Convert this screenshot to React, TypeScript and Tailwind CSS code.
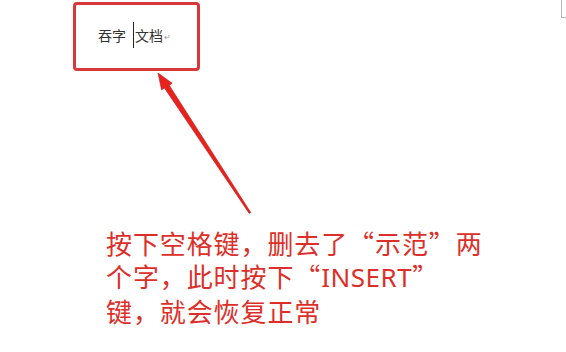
import React from "react";

export default function App() {
  const cjk = '"Noto Sans CJK SC", "Microsoft YaHei", sans-serif';
  return (
    <div className="relative w-[566px] h-[352px] overflow-hidden bg-white">
      {/* page corner mark */}
      <div className="absolute left-[561px] top-0 h-[18px] w-[6px] border-l border-b border-[#b8b8b8]" />

      <div className="flex flex-col">
        <div className="ml-[73px] mt-[2px] flex h-[69px] w-[127px] items-center rounded-[4px] border-[3px] border-[#d8383a] pl-[22px] pb-[3px]">
          <div
            className="flex items-center text-[14px] leading-none text-[#333]"
            style={{ fontFamily: cjk }}
          >
            <span>吞字</span>
            <span className="ml-[7px] mr-[1px] h-[26px] w-[1px] bg-[#222]" />
            <span>文档</span>
            <span className="ml-[1px] mt-[4px] text-[8px] text-[#999]">↵</span>
          </div>
        </div>

        <div
          className="ml-[106px] mt-[155px] text-[26px] leading-[33px] tracking-[0.9px] text-[#dd2f29]"
          style={{ fontFamily: cjk }}
        >
          <div className="whitespace-nowrap">按下空格键，删去了“示范”两</div>
          <div className="whitespace-nowrap">
            个字，此时按下“
            <span style={{ fontFamily: '"Noto Sans", sans-serif' }} className="tracking-[0.5px]">INSERT</span>
            ”
          </div>
          <div className="whitespace-nowrap">键，就会恢复正常</div>
        </div>
      </div>

      <svg
        className="pointer-events-none absolute left-0 top-0"
        width="566"
        height="352"
        viewBox="0 0 566 352"
      >
        <polygon
          points="158,73 172.2,83.3 169.2,85.2 250.8,212.6 249.2,213.4 164.4,87.9 161.6,89.9"
          fill="#e8231e"
          stroke="#c01a18"
          strokeWidth="0.6"
          strokeLinejoin="round"
        />
      </svg>
    </div>
  );
}
